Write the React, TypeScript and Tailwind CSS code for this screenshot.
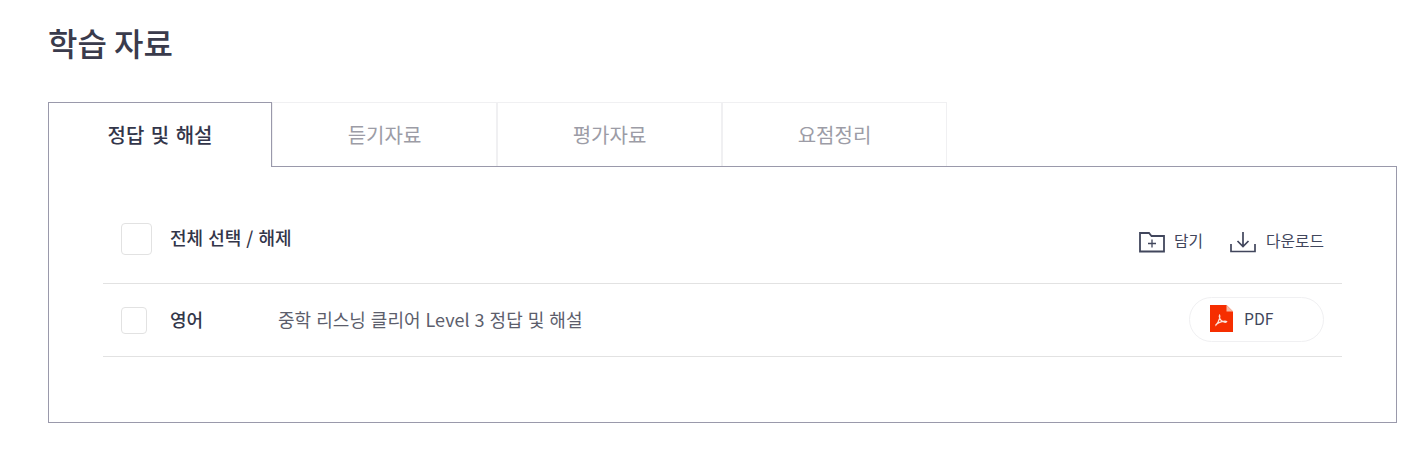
const tabs = ['정답 및 해설', '듣기자료', '평가자료', '요점정리'];

function FolderPlusIcon() {
  return (
    <svg width="26" height="22" viewBox="0 0 26 22" fill="none" stroke="#41465c" strokeWidth="1.8">
      <path d="M1 20.500V2h9l2.500 3H25v15.500z" />
      <path d="M13 8.500v8M9 12.500h8" strokeWidth="1.3" />
    </svg>
  );
}

function DownloadIcon() {
  return (
    <svg width="26" height="22" viewBox="0 0 26 22" fill="none" stroke="#41465c" strokeWidth="1.7">
      <path d="M1 13v7.500h24V13" />
      <path d="M13 1v14.500M7.500 10l5.500 5.500 5.500-5.500" />
    </svg>
  );
}

function PdfIcon() {
  return (
    <svg className="mb-[2px]" width="23" height="27" viewBox="0 0 23 27">
      <path d="M0 0h16.500L23 6.500V27H0z" fill="#f62e00" />
      <path d="M16.500 0L23 6.500h-6.500z" fill="#f6b9a5" />
      <path
        d="M6 20c1.500-1.500 2.800-4 3.500-6.500.4-1.600.4-3 .1-3.500-.4.500-.4 2 .1 3.300.7 1.700 2 3 3.500 3.500 1.400.5 3.300.4 3.600-.2-.7-.6-3.300-.5-5.800.2-2 .6-3.700 1.700-5 2.700z"
        fill="none"
        stroke="#fbe3da"
        strokeWidth="1.200"
      />
    </svg>
  );
}

export default function App() {
  return (
    <div className="h-[458px] w-[1422px] overflow-hidden bg-white pl-12 font-['Noto_Sans_CJK_KR','Noto_Sans',sans-serif] text-[#33364a]">
      <div className="flex h-[102px] items-start pt-[19px]">
        <h2 className="text-[32px] leading-[46px] font-medium text-[#3a3b4c]">학습 자료</h2>
      </div>

      {/* 탭 */}
      <div className="relative z-10 flex h-[65px] w-[1349px]">
        {tabs.map((tab, idx) =>
          idx === 0 ? (
            <div
              key={tab}
              className="flex h-[65px] w-[224px] items-center justify-center border border-b-0 border-[#9a99ab] bg-white text-[20px] font-medium [word-spacing:2px]"
            >
              {tab}
            </div>
          ) : (
            <div
              key={tab}
              className="flex h-[64px] w-[225px] items-center justify-center border-x border-t border-[#f0f0f2] text-[20px] text-[#9c9ca6]"
            >
              {tab}
            </div>
          ),
        )}
      </div>

      {/* 패널 */}
      <div className="-mt-px h-[257px] w-[1349px] border border-[#9a99ab] px-[54px] pt-[56px]">
        <div className="flex h-[61px] items-start justify-between border-b border-[#e2e2e2] px-[18px]">
          <div className="flex h-[32px] items-center gap-[18px]">
            <span className="h-[32px] w-[31px] rounded-[4px] border border-[#e2e2e2]" />
            <span className="-mt-[4px] text-[18px] font-medium [word-spacing:1px]">전체 선택 / 해제</span>
          </div>
          <div className="mt-[8px] flex items-center gap-[27px] text-[15.750px] text-[#41465c]">
            <button className="flex items-center gap-[9px]">
              <FolderPlusIcon />
              <span className="-mt-[2px]">담기</span>
            </button>
            <button className="flex items-center gap-[10px]">
              <DownloadIcon />
              <span className="-mt-[2px]">다운로드</span>
            </button>
          </div>
        </div>

        <div className="flex h-[73px] items-center justify-between border-b border-[#e2e2e2] px-[18px]">
          <div className="flex items-center">
            <span className="h-[27px] w-[26px] rounded-[4px] border border-[#e2e2e2]" />
            <span className="-mt-px ml-[23px] w-[108px] text-[18px] font-medium">영어</span>
            <span className="-mt-px text-[18px] text-[#5c5e6c] [word-spacing:1px]">
              중학 리스닝 클리어 Level 3 정답 및 해설
            </span>
          </div>
          <button className="mb-px flex h-[45px] w-[135px] items-center gap-[11px] rounded-full border border-[#f0f0f2] pl-[20px] text-[15.750px] text-[#41465c]">
            <PdfIcon />
            <span className="-mt-[2px]">PDF</span>
          </button>
        </div>
      </div>
    </div>
  );
}
